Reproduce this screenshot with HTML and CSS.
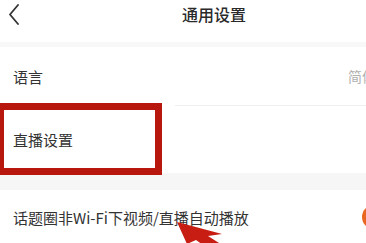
FILE: index.html
```html
<!DOCTYPE html>
<html lang="zh">
<head>
<meta charset="utf-8">
<link rel="stylesheet" href="styles.css">
</head>
<body>
<div class="page">
  <header class="topbar">
    <svg class="back" width="14" height="22" viewBox="0 0 14 22"><path d="M11 2 L3 11.5 L11 21" fill="none" stroke="#333" stroke-width="1.8" stroke-linecap="round" stroke-linejoin="round"/></svg>
    <div class="title">通用设置</div>
  </header>
  <div class="band thin"></div>
  <div class="row lang">
    <span class="label">语言</span>
    <span class="value">简体</span>
  </div>
  <div class="divider"></div>
  <div class="row live">
    <span class="label">直播设置</span>
  </div>
  <div class="band"></div>
  <div class="row auto">
    <span class="label">话题圈非Wi-Fi下视频/直播自动播放</span>
    <span class="toggle"></span>
  </div>
  <div class="highlight"></div>
  <svg class="arrow" width="70" height="30" viewBox="0 0 70 30"><polygon points="7,12 52,24 38,26 60,40 40,40 26,30 17,34" fill="#c81d12"/></svg>
</div>
</body>
</html>
```
FILE: styles.css
```css
html, body {
  margin: 0;
  padding: 0;
  background: #fff;
}
.page {
  position: relative;
  width: 366px;
  height: 243px;
  overflow: hidden;
  font-family: "Noto Sans CJK SC", "Noto Sans", sans-serif;
  color: #333;
}
.topbar {
  height: 42px;
  display: flex;
  align-items: center;
  position: relative;
}
.back {
  margin-left: 7px;
  margin-top: -14px;
}
.title {
  position: absolute;
  left: 182px;
  top: 2px;
  font-size: 16px;
  font-weight: 500;
  color: #2a2a2a;
}
.band {
  height: 17px;
  background: #f6f6f6;
}
.band.thin {
  height: 5px;
  background: #f8f8f8;
}
.row {
  display: flex;
  align-items: center;
  justify-content: space-between;
  padding-left: 13px;
  font-size: 15px;
}
.lang {
  height: 58px;
}
.divider {
  height: 1px;
  background: #efefef;
  margin-left: 175px;
}
.live {
  height: 67px;
}
.auto {
  height: 54px;
}
.value {
  color: #b0b0b0;
  font-size: 14px;
  margin-right: -10px;
}
.toggle {
  width: 24px;
  height: 24px;
  border-radius: 50%;
  background: #e8661f;
  margin-right: -20px;
}
.highlight {
  position: absolute;
  left: -3px;
  top: 103px;
  width: 151px;
  height: 58px;
  border: 7px solid #b8170d;
}
.arrow {
  position: absolute;
  left: 170px;
  top: 210px;
  overflow: visible;
}
```
